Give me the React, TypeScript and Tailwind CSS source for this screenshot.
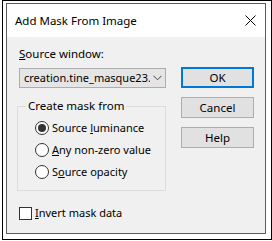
import React from "react";

const font = { fontFamily: '"Noto Sans", "Segoe UI", Arial, sans-serif' };

function Radio({ checked, children }: { checked?: boolean; children: React.ReactNode }) {
  return (
    <div className="flex h-[22px] items-center">
      <div className="ml-[17px] flex h-[14px] w-[14px] items-center justify-center rounded-full border border-[#333333] bg-white">
        {checked && <div className="h-[8px] w-[8px] rounded-full bg-[#333333]" />}
      </div>
      <span className="ml-[3px] text-[11px] leading-[16px] text-black">{children}</span>
    </div>
  );
}

function Btn({ children, primary }: { children: React.ReactNode; primary?: boolean }) {
  return (
    <div
      className={
        "flex h-[21px] w-[73px] items-center justify-center bg-[#e1e1e1] text-[11.5px] leading-[16px] text-black " +
        (primary ? "border-2 border-[#0078d7]" : "border border-[#adadad]")
      }
    >
      {children}
    </div>
  );
}

export default function App() {
  return (
    <div className="h-[241px] w-[272px] bg-white" style={font}>
      <div className="ml-[2px] h-[240px] w-[270px] border border-black">
        <div className="ml-[3px] mt-[2px] flex h-[231px] w-[260px] flex-col border border-[#5c5c5c]">
          {/* title bar */}
          <div className="flex h-[33px] items-center justify-between bg-white pl-[8px] pr-[9px]">
            <span className="text-[11.5px] leading-[16px] text-black">Add Mask From Image</span>
            <svg width="11" height="11" viewBox="0 0 11 11" className="mb-[1px]">
              <path d="M0.5 0.5 L10.5 10.5 M10.5 0.5 L0.5 10.5" stroke="#000" strokeWidth="1" fill="none" />
            </svg>
          </div>
          {/* body */}
          <div className="flex flex-1 bg-[#f0f0f0] pl-[10px]">
            <div className="flex w-[149px] flex-col">
              <div className="ml-[2px] mt-[9px] text-[11.5px] leading-[16px] text-black">
                <span className="underline">S</span>ource window:
              </div>
              <div className="ml-[2px] mt-[6px] flex h-[20px] w-[147px] items-center border border-[#adadad] bg-[#e5e5e5]">
                <span className="ml-[4px] w-[126px] overflow-hidden whitespace-nowrap text-[11px] leading-[16px] text-black">
                  creation.tine_masque23.
                </span>
                <svg width="9" height="6" viewBox="0 0 9 6" className="ml-[3px]">
                  <path d="M0.5 0.8 L4.5 4.8 L8.5 0.8" stroke="#444" strokeWidth="1" fill="none" />
                </svg>
              </div>
              <div className="relative mt-[18px] h-[85px] w-[149px] border border-[#dcdcdc]">
                <span className="absolute left-[8px] top-[-9px] bg-[#f0f0f0] px-[2px] text-[11.5px] leading-[16px] text-black">
                  Create mask from
                </span>
                <div className="mt-[10px] flex flex-col">
                  <Radio checked>
                    Source <span className="underline">l</span>uminance
                  </Radio>
                  <Radio>
                    <span className="underline">A</span>ny non-zero value
                  </Radio>
                  <Radio>
                    S<span className="underline">o</span>urce opacity
                  </Radio>
                </div>
              </div>
              <div className="ml-[2px] mt-[14px] flex h-[16px] items-center">
                <div className="h-[13px] w-[13px] border border-[#333333] bg-white" />
                <span className="ml-[3px] text-[11px] leading-[16px] text-black">
                  <span className="underline">I</span>nvert mask data
                </span>
              </div>
            </div>
            <div className="ml-[15px] mt-[30px] flex flex-col gap-[9px]">
              <Btn primary>OK</Btn>
              <Btn>Cancel</Btn>
              <Btn>Help</Btn>
            </div>
          </div>
        </div>
      </div>
    </div>
  );
}
